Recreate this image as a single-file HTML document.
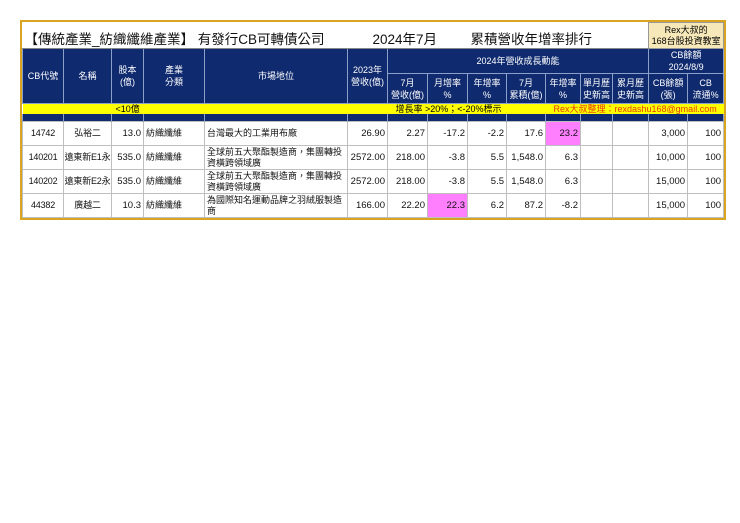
<!DOCTYPE html>
<html><head><meta charset="utf-8"><style>
body{margin:0;background:#fff;width:740px;height:523px;position:relative;font-family:"Liberation Sans","Noto Sans CJK TC",sans-serif;}
.wrap{position:absolute;left:20px;top:20px;border:2px solid #d9a520;}
table{border-collapse:collapse;table-layout:fixed;width:701px;}
td{padding:0;overflow:hidden;white-space:nowrap;font-size:9px;}
.t td{height:25px;}
.hd td{background:#0f2a6e;color:#fff;text-align:center;border:1px solid #8aa0c8;line-height:12px;}
.y td{background:#ffff00;height:10px;line-height:10px;position:relative;font-size:9px;}
.n td{background:#0f2a6e;height:7px;line-height:7px;font-size:1px;border-left:1px solid #8aa0c8;border-right:1px solid #8aa0c8;}
.d td{height:23px;border:1px solid #bfbfbf;text-align:right;padding-right:2px;font-size:9.5px;color:#111;line-height:11px;}
.d td.l{text-align:left;padding-left:2px;white-space:normal;font-size:9px;}
.d td.c{text-align:center;padding:0;font-size:9px;letter-spacing:-0.2px;}
.pk{background:#ff7fff;}
</style></head><body>
<div class="wrap">
<table>
<colgroup><col style="width:41px"><col style="width:48px"><col style="width:32px"><col style="width:61px"><col style="width:143px"><col style="width:40px"><col style="width:40px"><col style="width:40px"><col style="width:39px"><col style="width:39px"><col style="width:35px"><col style="width:32px"><col style="width:36px"><col style="width:39px"><col style="width:36px"></colgroup>
<tr class="t"><td colspan="13" style="position:relative;font-size:13.5px;color:#111;border-bottom:1px solid #888;">
<span style="position:absolute;left:2px;top:5px;">【傳統產業_紡織纖維產業】 有發行CB可轉債公司</span>
<span style="position:absolute;left:350px;top:5px;">2024年7月</span>
<span style="position:absolute;left:448px;top:5px;">累積營收年增率排行</span></td>
<td colspan="2" style="background:#f7e8b9;text-align:center;font-size:9px;line-height:11px;border:1px solid #999;">Rex大叔的<br>168台股投資教室</td></tr>
<tr class="hd" style="height:22px"><td rowspan="2">CB代號</td><td rowspan="2">名稱</td><td rowspan="2">股本<br>(億)</td><td rowspan="2">產業<br>分類</td><td rowspan="2">市場地位</td><td rowspan="2">2023年<br>營收(億)</td><td colspan="7">2024年營收成長動能</td><td colspan="2">CB餘額<br>2024/8/9</td></tr>
<tr class="hd" style="height:30px"><td>7月<br>營收(億)</td><td>月增率<br>%</td><td>年增率<br>%</td><td>7月<br>累積(億)</td><td>年增率<br>%</td><td>單月歷<br>史新高</td><td>累月歷<br>史新高</td><td>CB餘額<br>(張)</td><td>CB<br>流通%</td></tr>
<tr class="y"><td colspan="15"><span style="position:absolute;left:93px;top:0;">&lt;10億</span><span style="position:absolute;left:373px;top:0;">增長率 &gt;20%；&lt;-20%標示</span><span style="position:absolute;left:531px;top:0;color:#e63a00;">Rex大叔整理：rexdashu168@gmail.com</span>&nbsp;</td></tr>
<tr class="n"><td></td><td></td><td></td><td></td><td></td><td></td><td></td><td></td><td></td><td></td><td></td><td></td><td></td><td></td><td></td></tr>
<tr class="d"><td class="c">14742</td><td class="c">弘裕二</td><td>13.0</td><td class="l">紡織纖維</td><td class="l">台灣最大的工業用布廠</td><td>26.90</td><td>2.27</td><td>-17.2</td><td>-2.2</td><td>17.6</td><td class="pk">23.2</td><td></td><td></td><td>3,000</td><td>100</td></tr>
<tr class="d"><td class="c">140201</td><td class="c">遠東新E1永</td><td>535.0</td><td class="l">紡織纖維</td><td class="l">全球前五大聚酯製造商，集團轉投資橫跨領域廣</td><td>2572.00</td><td>218.00</td><td>-3.8</td><td>5.5</td><td>1,548.0</td><td>6.3</td><td></td><td></td><td>10,000</td><td>100</td></tr>
<tr class="d"><td class="c">140202</td><td class="c">遠東新E2永</td><td>535.0</td><td class="l">紡織纖維</td><td class="l">全球前五大聚酯製造商，集團轉投資橫跨領域廣</td><td>2572.00</td><td>218.00</td><td>-3.8</td><td>5.5</td><td>1,548.0</td><td>6.3</td><td></td><td></td><td>15,000</td><td>100</td></tr>
<tr class="d"><td class="c">44382</td><td class="c">廣越二</td><td>10.3</td><td class="l">紡織纖維</td><td class="l">為國際知名運動品牌之羽絨服製造商</td><td>166.00</td><td>22.20</td><td class="pk">22.3</td><td>6.2</td><td>87.2</td><td>-8.2</td><td></td><td></td><td>15,000</td><td>100</td></tr>
</table>
</div>
</body></html>
